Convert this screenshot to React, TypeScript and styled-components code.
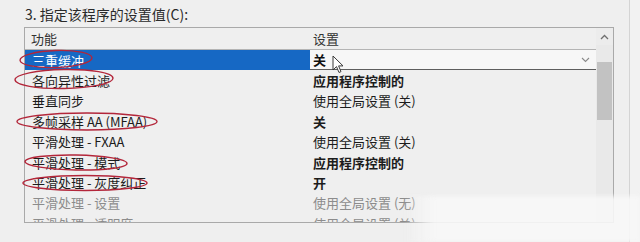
import React from 'react'
import styled, { createGlobalStyle } from 'styled-components'

const GlobalStyle = createGlobalStyle`
    html, body {
        margin: 0;
        padding: 0;
        background: #efefef;
    }
    body {
        font-family: "Noto Sans CJK SC", "Noto Sans", "Liberation Sans", sans-serif;
        color: #1c1c1c;
    }
`

const Page = styled.div`
    position: relative;
    display: flex;
    width: 640px;
    height: 242px;
    overflow: hidden;
    background: #efefef;
`

const Main = styled.div`
    flex: 1;
    padding: 0 15px 0 24px;
    display: flex;
    flex-direction: column;
`

const Rail = styled.div`
    width: 10px;
    border-left: 1px solid #d4d4d4;
    background: #f2f2f2;
`

const Title = styled.div`
    height: 27px;
    display: flex;
    align-items: center;
    padding-left: 1px;
    font-size: 14px;
    color: #2a2a2a;
`

const Panel = styled.div`
    display: flex;
    height: 196px;
    box-sizing: border-box;
    border: 1px solid #a9a9a9;
    overflow: hidden;
`

const List = styled.div`
    flex: 1;
    display: flex;
    flex-direction: column;
    overflow: hidden;
`

const HeaderRow = styled.div`
    display: grid;
    grid-template-columns: 285px 1fr;
    height: 21px;
    flex-shrink: 0;
    border-bottom: 1px solid #b4b4b4;
    font-size: 13px;
    color: #333;
`

const HeaderCell = styled.div<{ $pad: number }>`
    display: flex;
    align-items: center;
    padding-left: ${({ $pad }) => $pad}px;
`

const Row = styled.div`
    display: grid;
    grid-template-columns: 285px 1fr;
    height: 20.4px;
    flex-shrink: 0;
    font-size: 13px;
`

const NameCell = styled.div<{ $selected?: boolean; $dim?: boolean }>`
    display: flex;
    align-items: center;
    padding-left: 7px;
    white-space: nowrap;
    background: ${({ $selected }) => ($selected ? '#1668c4' : 'transparent')};
    color: ${({ $selected, $dim }) => ($selected ? '#ffffff' : $dim ? '#8c8c8c' : '#1c1c1c')};
`

const ValueCell = styled.div<{ $bold?: boolean; $dim?: boolean }>`
    display: flex;
    align-items: center;
    padding-left: 3px;
    white-space: nowrap;
    font-weight: ${({ $bold }) => ($bold ? 700 : 400)};
    color: ${({ $dim }) => ($dim ? '#8c8c8c' : '#1c1c1c')};
`

const Combo = styled.div`
    display: flex;
    align-items: center;
    justify-content: space-between;
    padding: 0 6px 0 3px;
    background: #f7f7f7;
    border-bottom: 1px solid #5e5e5e;
    font-weight: 700;
    color: #111;
`

const Scrollbar = styled.div`
    width: 17px;
    display: flex;
    flex-direction: column;
    background: #e9e9e9;
`

const ArrowButton = styled.div`
    height: 17px;
    display: flex;
    align-items: center;
    justify-content: center;
    background: #ececec;
`

const Track = styled.div`
    flex: 1;
    padding: 17px 1px 0;
`

const Thumb = styled.div`
    height: 58px;
    background: #c2c2c2;
`

const Marks = styled.svg`
    position: absolute;
    left: 0;
    top: 0;
    pointer-events: none;
`

const Cursor = styled.svg`
    position: absolute;
    left: 332px;
    top: 55px;
    pointer-events: none;
`

const Haze = styled.div`
    position: absolute;
    left: 405px;
    top: 196px;
    width: 235px;
    height: 46px;
    pointer-events: none;
    background: linear-gradient(to right, rgba(247, 247, 247, 0), rgba(247, 247, 247, 0.9) 12%);
    filter: blur(2px);
`

type Item = { name: string; value: string; bold?: boolean; dim?: boolean }

const items: Item[] = [
  { name: '各向异性过滤', value: '应用程序控制的', bold: true },
  { name: '垂直同步', value: '使用全局设置 (关)' },
  { name: '多帧采样 AA (MFAA)', value: '关', bold: true },
  { name: '平滑处理 - FXAA', value: '使用全局设置 (关)' },
  { name: '平滑处理 - 模式', value: '应用程序控制的', bold: true },
  { name: '平滑处理 - 灰度纠正', value: '开', bold: true },
  { name: '平滑处理 - 设置', value: '使用全局设置 (无)', dim: true },
  { name: '平滑处理 - 透明度', value: '使用全局设置 (关)', dim: true },
]

const rings = [
  { cx: 56, cy: 59, rx: 36, ry: 8.5, r: -2 },
  { cx: 64, cy: 79, rx: 49, ry: 9.5, r: -1 },
  { cx: 87, cy: 121.5, rx: 70, ry: 8.5, r: 0 },
  { cx: 76, cy: 162.5, rx: 51, ry: 7.5, r: 1 },
  { cx: 85, cy: 183, rx: 62, ry: 7.5, r: 0 },
]

const App: React.FC = () => {
  return (
    <Page>
      <GlobalStyle />
      <Main>
        <Title>3. 指定该程序的设置值(C):</Title>
        <Panel>
          <List>
            <HeaderRow>
              <HeaderCell $pad={6}>功能</HeaderCell>
              <HeaderCell $pad={3}>设置</HeaderCell>
            </HeaderRow>
            <Row>
              <NameCell $selected>三重缓冲</NameCell>
              <Combo>
                <span>关</span>
                <svg width="9" height="6" viewBox="0 0 9 6">
                  <path d="M1 1 L4.5 4.5 L8 1" fill="none" stroke="#8a8a8a" strokeWidth="1.1" />
                </svg>
              </Combo>
            </Row>
            {items.map((it) => (
              <Row key={it.name}>
                <NameCell $dim={it.dim}>{it.name}</NameCell>
                <ValueCell $bold={it.bold} $dim={it.dim}>
                  {it.value}
                </ValueCell>
              </Row>
            ))}
          </List>
          <Scrollbar>
            <ArrowButton>
              <svg width="9" height="6" viewBox="0 0 9 6">
                <path d="M1 5 L4.5 1.5 L8 5" fill="none" stroke="#6f6f6f" strokeWidth="1.3" />
              </svg>
            </ArrowButton>
            <Track>
              <Thumb />
            </Track>
          </Scrollbar>
        </Panel>
      </Main>
      <Rail />
      <Marks width="640" height="242" viewBox="0 0 640 242">
        {rings.map((e, i) => (
          <ellipse
            key={i}
            cx={e.cx}
            cy={e.cy}
            rx={e.rx}
            ry={e.ry}
            transform={`rotate(${e.r} ${e.cx} ${e.cy})`}
            fill="none"
            stroke="#b3263a"
            strokeWidth="1.4"
          />
        ))}
      </Marks>
      <Cursor width="12" height="19" viewBox="0 0 12 19">
        <path
          d="M1 1 L1 15 L4.5 11.6 L7 17.5 L9 16.6 L6.6 10.9 L11 10.9 Z"
          fill="#ffffff"
          stroke="#3a3a3a"
          strokeWidth="1"
          strokeLinejoin="round"
        />
      </Cursor>
      <Haze />
    </Page>
  )
}

export default App
